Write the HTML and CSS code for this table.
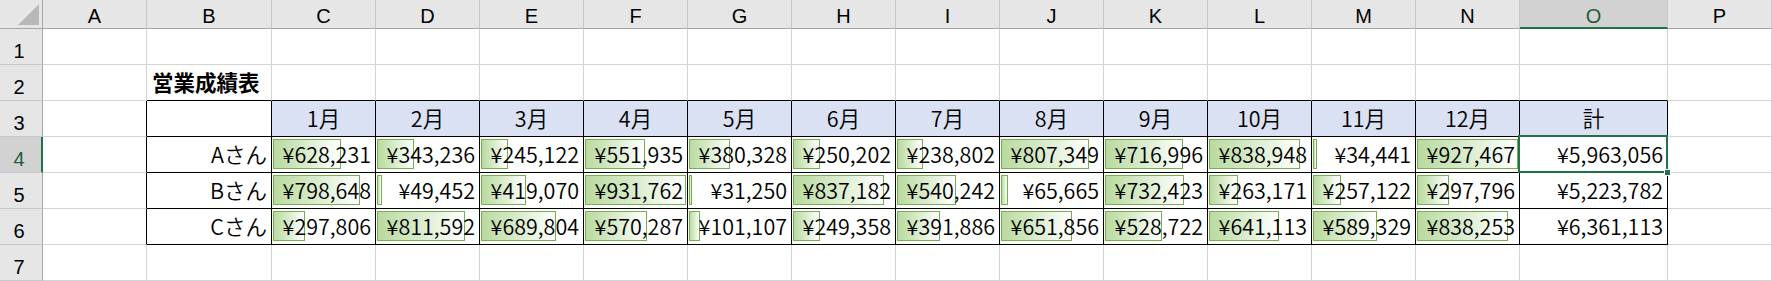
FILE: index.html
```html
<!DOCTYPE html>
<html lang="ja">
<head>
<meta charset="utf-8">
<title>営業成績表</title>
<link rel="stylesheet" href="styles.css">
</head>
<body>
<div class="sheet">
  <!-- column headers -->
  <div class="corner"><svg class="corner-tri" width="21" height="21" viewBox="0 0 21 21"><polygon points="21,0 21,21 0,21" fill="#b8b8b8"/></svg></div>
  <div class="ch">A</div><div class="ch">B</div><div class="ch">C</div><div class="ch">D</div><div class="ch">E</div><div class="ch">F</div><div class="ch">G</div><div class="ch">H</div><div class="ch">I</div><div class="ch">J</div><div class="ch">K</div><div class="ch">L</div><div class="ch">M</div><div class="ch">N</div><div class="ch ch-sel">O</div><div class="ch">P</div>

  <!-- row 1 -->
  <div class="rh">1</div>
  <div class="c"></div><div class="c"></div><div class="c"></div><div class="c"></div><div class="c"></div><div class="c"></div><div class="c"></div><div class="c"></div><div class="c"></div><div class="c"></div><div class="c"></div><div class="c"></div><div class="c"></div><div class="c"></div><div class="c"></div><div class="c"></div>

  <!-- row 2 -->
  <div class="rh">2</div>
  <div class="c"></div>
  <div class="c tt title">営業成績表</div>
  <div class="c tt"></div><div class="c tt"></div><div class="c tt"></div><div class="c tt"></div><div class="c tt"></div><div class="c tt"></div><div class="c tt"></div><div class="c tt"></div><div class="c tt"></div><div class="c tt"></div><div class="c tt"></div><div class="c tt"></div><div class="c tt"></div>
  <div class="c"></div>

  <!-- row 3 -->
  <div class="rh">3</div>
  <div class="c tl"></div>
  <div class="c tb"></div>
  <div class="c tb mh">1月</div><div class="c tb mh">2月</div><div class="c tb mh">3月</div><div class="c tb mh">4月</div><div class="c tb mh">5月</div><div class="c tb mh">6月</div><div class="c tb mh">7月</div><div class="c tb mh">8月</div><div class="c tb mh">9月</div><div class="c tb mh">10月</div><div class="c tb mh">11月</div><div class="c tb mh">12月</div><div class="c tb mh">計</div>
  <div class="c"></div>

  <!-- row 4 -->
  <div class="rh rh-sel">4</div>
  <div class="c tl"></div>
  <div class="c tb num">Aさん</div>
  <div class="c tb num"><div class="bar" style="width:68.1px"></div><span>¥628,231</span></div>
  <div class="c tb num"><div class="bar" style="width:37.2px"></div><span>¥343,236</span></div>
  <div class="c tb num"><div class="bar" style="width:26.6px"></div><span>¥245,122</span></div>
  <div class="c tb num"><div class="bar" style="width:59.8px"></div><span>¥551,935</span></div>
  <div class="c tb num"><div class="bar" style="width:41.2px"></div><span>¥380,328</span></div>
  <div class="c tb num"><div class="bar" style="width:27.1px"></div><span>¥250,202</span></div>
  <div class="c tb num"><div class="bar" style="width:25.9px"></div><span>¥238,802</span></div>
  <div class="c tb num"><div class="bar" style="width:87.5px"></div><span>¥807,349</span></div>
  <div class="c tb num"><div class="bar" style="width:77.7px"></div><span>¥716,996</span></div>
  <div class="c tb num"><div class="bar" style="width:90.9px"></div><span>¥838,948</span></div>
  <div class="c tb num"><div class="bar" style="width:3.7px"></div><span>¥34,441</span></div>
  <div class="c tb num"><div class="bar" style="width:100.5px"></div><span>¥927,467</span></div>
  <div class="c tb num active"><div class="selection"><div class="handle"></div></div><span>¥5,963,056</span></div>
  <div class="c"></div>

  <!-- row 5 -->
  <div class="rh">5</div>
  <div class="c tl"></div>
  <div class="c tb num">Bさん</div>
  <div class="c tb num"><div class="bar" style="width:86.6px"></div><span>¥798,648</span></div>
  <div class="c tb num"><div class="bar" style="width:5.4px"></div><span>¥49,452</span></div>
  <div class="c tb num"><div class="bar" style="width:45.4px"></div><span>¥419,070</span></div>
  <div class="c tb num"><div class="bar" style="width:101px"></div><span>¥931,762</span></div>
  <div class="c tb num"><div class="bar" style="width:3.4px"></div><span>¥31,250</span></div>
  <div class="c tb num"><div class="bar" style="width:90.7px"></div><span>¥837,182</span></div>
  <div class="c tb num"><div class="bar" style="width:58.6px"></div><span>¥540,242</span></div>
  <div class="c tb num"><div class="bar" style="width:7.1px"></div><span>¥65,665</span></div>
  <div class="c tb num"><div class="bar" style="width:79.4px"></div><span>¥732,423</span></div>
  <div class="c tb num"><div class="bar" style="width:28.5px"></div><span>¥263,171</span></div>
  <div class="c tb num"><div class="bar" style="width:27.9px"></div><span>¥257,122</span></div>
  <div class="c tb num"><div class="bar" style="width:32.3px"></div><span>¥297,796</span></div>
  <div class="c tb num"><span>¥5,223,782</span></div>
  <div class="c"></div>

  <!-- row 6 -->
  <div class="rh">6</div>
  <div class="c tl"></div>
  <div class="c tb num">Cさん</div>
  <div class="c tb num"><div class="bar" style="width:32.3px"></div><span>¥297,806</span></div>
  <div class="c tb num"><div class="bar" style="width:88px"></div><span>¥811,592</span></div>
  <div class="c tb num"><div class="bar" style="width:74.8px"></div><span>¥689,804</span></div>
  <div class="c tb num"><div class="bar" style="width:61.8px"></div><span>¥570,287</span></div>
  <div class="c tb num"><div class="bar" style="width:11px"></div><span>¥101,107</span></div>
  <div class="c tb num"><div class="bar" style="width:27px"></div><span>¥249,358</span></div>
  <div class="c tb num"><div class="bar" style="width:42.5px"></div><span>¥391,886</span></div>
  <div class="c tb num"><div class="bar" style="width:70.7px"></div><span>¥651,856</span></div>
  <div class="c tb num"><div class="bar" style="width:57.3px"></div><span>¥528,722</span></div>
  <div class="c tb num"><div class="bar" style="width:69.5px"></div><span>¥641,113</span></div>
  <div class="c tb num"><div class="bar" style="width:63.9px"></div><span>¥589,329</span></div>
  <div class="c tb num"><div class="bar" style="width:90.9px"></div><span>¥838,253</span></div>
  <div class="c tb num"><span>¥6,361,113</span></div>
  <div class="c"></div>

  <!-- row 7 -->
  <div class="rh">7</div>
  <div class="c"></div><div class="c"></div><div class="c"></div><div class="c"></div><div class="c"></div><div class="c"></div><div class="c"></div><div class="c"></div><div class="c"></div><div class="c"></div><div class="c"></div><div class="c"></div><div class="c"></div><div class="c"></div><div class="c"></div><div class="c"></div>
</div>
</body>
</html>
```

FILE: styles.css
```css
html, body {
  margin: 0;
  padding: 0;
  background: #ffffff;
  overflow: hidden;
}

.sheet {
  display: grid;
  grid-template-columns: 43px 104px 125px repeat(12, 104px) 148px 104px;
  grid-template-rows: 29px repeat(7, 36px);
  width: 1772px;
  height: 281px;
  font-family: "Noto Sans CJK JP", "Noto Sans", sans-serif;
  color: #000000;
}

.sheet > div {
  box-sizing: border-box;
}

/* header cells */
.corner {
  background: #e6e6e6;
  border-right: 1px solid #a6a6a6;
  border-bottom: 1px solid #a6a6a6;
  display: flex;
  align-items: flex-end;
  justify-content: flex-end;
  padding: 0 3px 3px 0;
}

.corner-tri {
  display: block;
}

.ch {
  background: #e6e6e6;
  border-right: 1px solid #c8c8c8;
  border-bottom: 1px solid #a6a6a6;
  font-family: "Liberation Sans", Arial, sans-serif;
  font-size: 20px;
  line-height: 20px;
  display: flex;
  align-items: flex-end;
  justify-content: center;
  padding-bottom: 2px;
  color: #000000;
}

.ch-sel {
  background: #d2d2d2;
  border-bottom: 2px solid #217346;
  padding-bottom: 1px;
  color: #1d5e3b;
}

.rh {
  background: #e6e6e6;
  border-right: 1px solid #a6a6a6;
  border-bottom: 1px solid #c8c8c8;
  font-family: "Liberation Sans", Arial, sans-serif;
  font-size: 20px;
  line-height: 20px;
  display: flex;
  align-items: flex-end;
  justify-content: center;
  padding-bottom: 3px;
  padding-right: 4px;
}

.rh-sel {
  background: #d2d2d2;
  border-right: 2px solid #217346;
  padding-right: 3px;
  color: #1d5e3b;
}

/* body cells */
.c {
  border-right: 1px solid #d4d4d4;
  border-bottom: 1px solid #d4d4d4;
  position: relative;
  display: flex;
  align-items: flex-end;
  font-size: 21.5px;
  font-weight: 350;
  line-height: 26px;
  padding: 0 4px 5px 4px;
  white-space: nowrap;
}

.tt {
  border-bottom-color: #000000;
}

.tl {
  border-right-color: #000000;
}

.tb {
  border-right-color: #000000;
  border-bottom-color: #000000;
}

.title {
  font-weight: bold;
  padding-left: 5px;
  overflow: visible;
}

.mh {
  background: #d9e1f2;
  justify-content: center;
}

.num {
  justify-content: flex-end;
}

.num span {
  position: relative;
  z-index: 1;
}

.bar {
  position: absolute;
  left: 1px;
  top: 2px;
  bottom: 3px;
  box-sizing: border-box;
  border: 1px solid #74b04d;
  background: linear-gradient(to right, #b9da9f 0%, #d6eac8 45%, #ffffff 100%);
}

.active {
  z-index: 2;
}

.selection {
  position: absolute;
  left: -2px;
  top: -2px;
  right: -1px;
  bottom: -1px;
  border: 2px solid #217346;
  pointer-events: none;
}

.handle {
  position: absolute;
  right: -5px;
  bottom: -5px;
  width: 7px;
  height: 7px;
  background: #217346;
  border: 1px solid #ffffff;
  box-sizing: border-box;
}
```
